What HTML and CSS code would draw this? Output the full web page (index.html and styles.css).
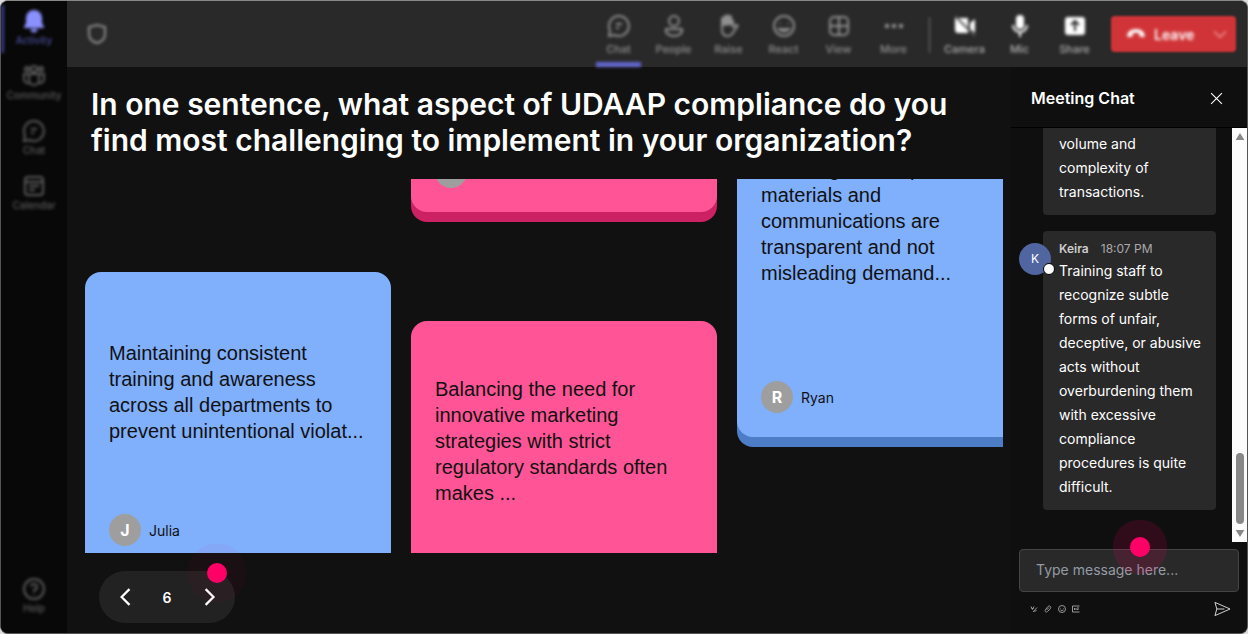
FILE: index.html
```html
<!DOCTYPE html>
<html lang="en">
<head>
	<meta charset="utf-8">
	<title>Meeting</title>
	<link rel="stylesheet" href="styles.css">
</head>
<body>
<div class="app">
	<nav class="rail">
		<a class="rail-item active" href="#">
			<svg viewBox="0 0 24 24" class="icon"><path class="solid" d="M12 1a8 8 0 0 0-8 8v5l-2 4v1h20v-1l-2-4V9a8 8 0 0 0-8-8zM8.500 20a3.500 3.500 0 0 0 7 0z"/></svg>
			<span>Activity</span>
		</a>
		<a class="rail-item" href="#">
			<svg viewBox="0 0 24 24" class="icon"><circle cx="12" cy="5" r="3"/><circle cx="5" cy="5" r="2"/><circle cx="19" cy="5" r="2"/><path d="M7 10h10v6a5 5 0 0 1-10 0zM7 10H2v5a4 4 0 0 0 5 4M17 10h5v5a4 4 0 0 1-5 4"/></svg>
			<span>Community</span>
		</a>
		<a class="rail-item" href="#">
			<svg viewBox="0 0 24 24" class="icon"><path d="M12 2a10 10 0 1 1-4.500 19L2 22l1-5.500A10 10 0 0 1 12 2zM9 10h6M9 14h3"/></svg>
			<span>Chat</span>
		</a>
		<a class="rail-item" href="#">
			<svg viewBox="0 0 24 24" class="icon"><rect x="3" y="3" width="18" height="18" rx="3"/><path d="M3 8h18M7 12h10M7 16h6"/></svg>
			<span>Calendar</span>
		</a>
		<a class="rail-item rail-help" href="#">
			<svg viewBox="0 0 24 24" class="icon"><circle cx="12" cy="12" r="10"/><path d="M9 9.500a3 3 0 1 1 3 3.500v2M12 17v1"/></svg>
			<span>Help</span>
		</a>
	</nav>

	<div class="main">
		<header class="topbar">
			<svg viewBox="0 0 24 24" class="icon shield"><path d="M12 3l8 2v7c0 5-4 8-8 9-4-1-8-4-8-9V5z"/></svg>
			<div class="tools">
				<button class="tool selected">
					<svg viewBox="0 0 24 24" class="icon"><path d="M12 2a10 10 0 1 1-4.500 19L2 22l1-5.500A10 10 0 0 1 12 2zM9 10h6M9 14h3"/></svg>
					<span>Chat</span>
				</button>
				<button class="tool">
					<svg viewBox="0 0 24 24" class="icon"><circle cx="12" cy="7" r="5"/><path d="M4 15h16c1 4-3 7-8 7s-9-3-8-7z"/></svg>
					<span>People</span>
				</button>
				<button class="tool">
					<svg viewBox="0 0 24 24" class="icon"><path d="M5 12V5a1.500 1.500 0 0 1 3 0V3a1.500 1.500 0 0 1 3 0 1.500 1.500 0 0 1 3 1v2a1.500 1.500 0 0 1 2 1v6l3-2c2 0 2 1 1 2l-5 7c-4 4-10 2-10-4z"/><path class="solid" d="M5 12V5l3-2 3-1 3 2 2 3v4z"/></svg>
					<span>Raise</span>
				</button>
				<button class="tool">
					<svg viewBox="0 0 24 24" class="icon"><circle cx="12" cy="12" r="10"/><path d="M7 15q5 5 10 0zM8 9v1M16 9v1"/></svg>
					<span>React</span>
				</button>
				<button class="tool">
					<svg viewBox="0 0 24 24" class="icon"><rect x="3" y="3" width="18" height="18" rx="4"/><path d="M12 3v18M3 12h18"/></svg>
					<span>View</span>
				</button>
				<button class="tool">
					<svg viewBox="0 0 24 24" class="icon"><path class="solid" d="M3 10h4v4H3zM10 10h4v4h-4zM17 10h4v4h-4z"/></svg>
					<span>More</span>
				</button>
			</div>
			<div class="tools devices">
				<button class="tool">
					<svg viewBox="0 0 24 24" class="icon"><path class="solid" d="M2 4h13v15H4l-2-2zM17 9l5-4v14l-5-4z"/><path class="slash" d="M2 2l20 20"/></svg>
					<span>Camera</span>
				</button>
				<button class="tool">
					<svg viewBox="0 0 24 24" class="icon"><rect class="solid" x="8" y="1" width="8" height="14" rx="4"/><path d="M5 11a7 7 0 0 0 14 0M12 18v5"/></svg>
					<span>Mic</span>
				</button>
				<button class="tool">
					<svg viewBox="0 0 24 24" class="icon"><rect class="solid" x="2" y="3" width="20" height="18" rx="3"/><path class="cut" d="M12 17V8M8 11l4-4 4 4"/></svg>
					<span>Share</span>
				</button>
			</div>
			<button class="leave">
				<svg viewBox="0 0 24 24" class="icon"><path class="solid" d="M2 16c-2-6 4-10 10-10s12 4 10 10l-6-1v-4q-4-1-8 0v4z"/></svg>
				<span>Leave</span>
				<svg viewBox="0 0 24 24" class="icon chevron"><path d="M3 8l9 9 9-9"/></svg>
			</button>
		</header>

		<div class="content">
			<main class="stage">
				<h1>In one sentence, what aspect of UDAAP compliance do you find most challenging to implement in your organization?</h1>
				<div class="board">
					<div class="column column-left">
						<article class="card blue">
							<p>Maintaining consistent training and awareness across all departments to prevent unintentional violat...</p>
							<div class="author"><span class="avatar">J</span>Julia</div>
						</article>
					</div>
					<div class="column column-middle">
						<article class="card pink">
							<p></p>
							<div class="author"><span class="avatar"></span></div>
						</article>
						<article class="card pink">
							<p>Balancing the need for innovative marketing strategies with strict regulatory standards often makes ...</p>
						</article>
					</div>
					<div class="column column-right">
						<article class="card blue tall">
							<p>Ensuring that all promotional materials and communications are transparent and not misleading demand...</p>
							<div class="author"><span class="avatar">R</span>Ryan</div>
						</article>
					</div>
				</div>
				<div class="pager">
					<button aria-label="Previous"><svg viewBox="0 0 16 16"><path d="M12 1L5 8l7 7"/></svg></button>
					<span>6</span>
					<button aria-label="Next"><svg viewBox="0 0 16 16"><path d="M5 1l7 7-7 7"/></svg></button>
					<i class="hotspot"></i>
				</div>
			</main>

			<aside class="chat">
				<div class="chat-header">
					<h2>Meeting Chat</h2>
					<button aria-label="Close"><svg viewBox="0 0 12 12"><path d="M1 1l10 10M11 1L1 11"/></svg></button>
				</div>
				<div class="chat-body">
					<div class="messages">
						<div class="bubble earlier">
							<p>volume and complexity of transactions.</p>
						</div>
						<div class="bubble">
							<div class="person">K<i></i></div>
							<div class="meta"><b>Keira</b><time>18:07 PM</time></div>
							<p>Training staff to recognize subtle forms of unfair, deceptive, or abusive acts without overburdening them with excessive compliance procedures is quite difficult.</p>
						</div>
					</div>
					<div class="scrollbar">
						<svg viewBox="0 0 10 8"><path d="M5 0l5 8H0z"/></svg>
						<div class="thumb"></div>
						<svg viewBox="0 0 10 8"><path d="M5 8l5-8H0z"/></svg>
					</div>
				</div>
				<form class="compose">
					<input type="text" placeholder="Type message here..." aria-label="Message">
					<i class="hotspot"></i>
					<div class="compose-tools">
						<button type="button" aria-label="Format"><svg viewBox="0 0 16 16"><path d="M2 3l3 6 3-6M3 7h4M6 14l8-9M9 13l4-2"/></svg></button>
						<button type="button" aria-label="Attach"><svg viewBox="0 0 16 16"><path d="M5 10l5-5M3 9l5-6c4-3 7 1 5 4l-6 6c-4 3-6-1-4-4z"/></svg></button>
						<button type="button" aria-label="Emoji"><svg viewBox="0 0 16 16"><circle cx="8" cy="8" r="7"/><path d="M5 6v1M11 6v1M5 10q3 2 6 0"/></svg></button>
						<button type="button" aria-label="GIF"><svg viewBox="0 0 16 16"><path d="M15 2H1v12h14M5 6v4M8 6v4M10 6h4M10 9h3"/></svg></button>
						<button class="send" type="submit" aria-label="Send"><svg viewBox="0 0 18 16"><path d="M1 1l16 7-16 7 2-7zM3 8h8"/></svg></button>
					</div>
				</form>
			</aside>
		</div>
	</div>
</div>
</body>
</html>
```
FILE: styles.css
```css
*{
	margin: 0;
	padding: 0;
	box-sizing: border-box;
}
body{
	background: #ddd;
	font-family: Inter, "Liberation Sans", sans-serif;
	color: #fff;
}
button{
	background: none;
	border: 0;
	color: inherit;
	font: inherit;
}
svg{
	display: block;
	fill: none;
	stroke: currentColor;
}
.app{
	display: flex;
	height: 100vh;
	border: 1px solid #555;
	border-top-color: #888;
	border-radius: 8px;
	background: #111;
	overflow: hidden;
}
.icon{
	width: 24px;
	height: 24px;
	stroke-width: 2;
}
.solid{
	fill: currentColor;
	stroke: none;
}

/* left rail */
.rail{
	display: flex;
	flex-direction: column;
	flex: none;
	width: 66px;
	padding: 4px 0 14px;
	background: #080808;
}
.rail-item{
	display: flex;
	flex-direction: column;
	align-items: center;
	height: 55px;
	padding-top: 4px;
	border-left: 3px solid transparent;
	border-right: 3px solid transparent;
	color: #5c5c5c;
	font-size: 10px;
	font-weight: 500;
	line-height: 14px;
	text-decoration: none;
	filter: blur(1px) blur(1px);
}
.rail-item.active{
	height: 48px;
	margin-bottom: 7px;
	border-left-color: #3d3f8f;
	color: #8b90ff;
}
.rail-item.active span{
	color: #4a4e9c;
}
.rail-help{
	height: 46px;
	margin-top: auto;
}

/* top bar */
.topbar{
	display: flex;
	align-items: center;
	flex: none;
	height: 66px;
	padding: 0 11px 0 18px;
	background: #292929;
}
.shield{
	color: #909090;
}
.topbar > *{
	filter: blur(1px) blur(1px);
}
.tools{
	display: flex;
	height: 66px;
	margin-left: auto;
	color: #909090;
}
.tool{
	display: flex;
	flex-direction: column;
	align-items: center;
	width: 55px;
	padding-top: 13px;
	font-size: 11px;
	font-weight: 500;
	line-height: 23px;
}
.tool.selected{
	background: linear-gradient(#6367cf, #6367cf) center bottom / 45px 5px no-repeat;
}
.devices{
	position: relative;
	margin-left: 16px;
	color: #fff;
}
.devices span{
	color: #b0b0b0;
}
.devices::before{
	content: "";
	position: absolute;
	top: 16px;
	left: -8px;
	width: 1px;
	height: 36px;
	background: #777;
}
.slash{
	stroke: #555;
}
.cut{
	stroke: #292929;
}
.leave{
	display: flex;
	align-items: center;
	gap: 8px;
	width: 125px;
	height: 36px;
	margin-left: 9px;
	padding: 0 8px 0 15px;
	border-radius: 4px;
	background: #d13438;
	font-size: 14px;
	font-weight: 600;
}
.topbar .leave{
	filter: blur(1px);
}
.leave .icon{
	width: 20px;
	height: 20px;
}
.leave .icon, .leave span{
	filter: blur(1px);
}
.leave .chevron{
	width: 16px;
	height: 16px;
	margin-left: auto;
	color: #f0a0a0;
}

.main{
	display: flex;
	flex-direction: column;
	flex: 1;
	min-width: 0;
}
.content{
	display: flex;
	flex: 1;
	min-height: 0;
}

/* question and answers */
.stage{
	display: flex;
	flex-direction: column;
	align-items: flex-start;
	flex: 1;
	min-width: 0;
	padding: 19px 8px 10px 18px;
}
h1{
	max-width: 880px;
	padding-left: 6px;
	font-size: 30px;
	font-weight: 600;
	line-height: 36px;
}
.board{
	display: grid;
	grid-template-columns: repeat(3, 306px);
	gap: 20px;
	align-items: start;
	flex: 1;
	width: 100%;
	min-height: 0;
	margin: 21px 0 18px;
	overflow: hidden;
}
.column{
	display: flex;
	flex-direction: column;
	gap: 109px;
}
.column-left{
	margin-top: 93px;
}
.column-middle{
	margin-top: -265px;
}
.column-right{
	margin-top: -78px;
}
.card{
	display: flex;
	flex-direction: column;
	justify-content: space-between;
	min-height: 298px;
	padding: 24px;
	border-radius: 16px;
	color: #111;
}
.card.tall{
	min-height: 336px;
}
.card p{
	display: flex;
	align-items: center;
	height: 192px;
	font-family: "Liberation Sans", Arial, sans-serif;
	font-size: 20px;
	line-height: 26px;
}
.blue{
	background: #80affc;
	box-shadow: 0 10px #4d7dc6;
}
.pink{
	background: #ff5596;
	box-shadow: 0 10px #cc2263;
}
.author{
	display: flex;
	align-items: center;
	gap: 8px;
	font-size: 14px;
}
.avatar{
	width: 32px;
	height: 32px;
	border-radius: 50%;
	background: #9e9e9e;
	color: #fff;
	font-size: 16px;
	font-weight: 700;
	line-height: 32px;
	text-align: center;
}
.pager{
	position: relative;
	display: flex;
	align-items: center;
	justify-content: space-between;
	width: 136px;
	height: 52px;
	margin-left: 14px;
	padding: 0 17px;
	border-radius: 26px;
	background: #222;
	font-size: 14px;
	font-weight: 600;
}
.pager svg{
	width: 18px;
	height: 18px;
	stroke-width: 2;
}
.hotspot{
	position: absolute;
	width: 20px;
	height: 20px;
	border-radius: 50%;
	background: #ff0066;
}
.pager .hotspot{
	top: -8px;
	right: 8px;
	box-shadow: 0 0 0 19px rgba(255, 0, 102, .04);
}

/* chat panel */
.chat{
	display: flex;
	flex-direction: column;
	flex: none;
	width: 236px;
	background: #0f0f0f;
}
.chat-header{
	display: flex;
	align-items: center;
	justify-content: space-between;
	height: 61px;
	padding: 2px 24px 0 20px;
	border-bottom: 1px solid #000;
}
h2{
	font-size: 16px;
	font-weight: 600;
}
.chat-header svg{
	width: 13px;
	height: 13px;
}
.chat-body{
	display: flex;
	flex: 1;
	min-height: 0;
}
.messages{
	display: flex;
	flex-direction: column;
	justify-content: flex-end;
	gap: 16px;
	flex: 1;
	padding: 0 16px 32px 32px;
	overflow: hidden;
}
.bubble{
	position: relative;
	flex: none;
	padding: 8px 12px 11px 16px;
	border-radius: 4px;
	background: #292929;
	font-size: 14px;
	line-height: 24px;
}
.bubble.earlier{
	padding-top: 24px;
}
.meta{
	display: flex;
	gap: 12px;
	color: #ccc;
	font-size: 12px;
	line-height: 20px;
}
.meta b{
	font-weight: 600;
}
.meta time{
	color: #aaa;
}
.person{
	position: absolute;
	top: 12px;
	left: -24px;
	width: 32px;
	height: 32px;
	border-radius: 50%;
	background: #5165a0;
	font-size: 12px;
	line-height: 32px;
	text-align: center;
}
.person i{
	position: absolute;
	right: -4px;
	bottom: 0;
	width: 12px;
	height: 12px;
	border: 1px solid #000;
	border-radius: 50%;
	background: #fff;
}
.scrollbar{
	display: flex;
	flex-direction: column;
	align-items: center;
	gap: 6px;
	width: 15px;
	padding: 5px 0;
	background: #fcfcfc;
}
.scrollbar svg{
	width: 10px;
	height: 7px;
	fill: #888;
	stroke: none;
}
.thumb{
	width: 8px;
	height: 71px;
	margin-top: auto;
	border-radius: 4px;
	background: #888;
}
.compose{
	position: relative;
	padding: 7px 8px 16px;
}
.compose input{
	width: 100%;
	height: 43px;
	padding: 0 16px 2px;
	border: 1px solid #444;
	border-radius: 4px;
	background: #292929;
	color: #fff;
	font: 14px Inter, sans-serif;
}
.compose input::placeholder{
	color: #949ba5;
}
.compose .hotspot{
	top: -5px;
	left: 119px;
	box-shadow: 0 0 0 17px rgba(255, 0, 102, .14);
}
.compose-tools{
	display: flex;
	align-items: center;
	gap: 6px;
	padding: 9px 8px 0 11px;
	color: #999;
}
.compose-tools svg{
	width: 8px;
	height: 8px;
	stroke-width: 2;
}
.compose-tools .send{
	margin-left: auto;
	color: #ddd;
}
.compose-tools .send svg{
	width: 17px;
	height: 16px;
	stroke-width: 1;
}
```
